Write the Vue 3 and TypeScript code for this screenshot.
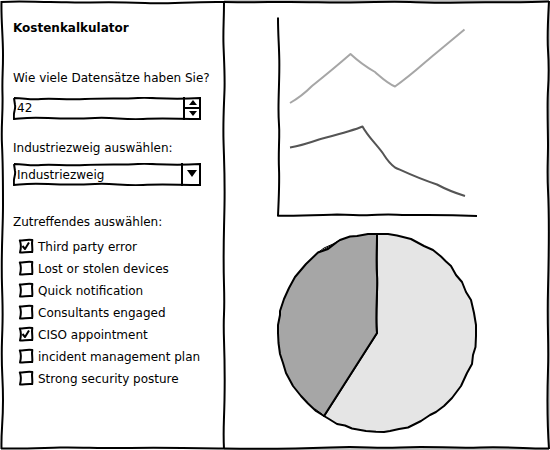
<script setup lang="ts">
import { ref } from 'vue'

interface Criterion {
  label: string
  checked: boolean
}

const records = ref<number>(42)
const industry = ref<string>('Industriezweig')
const criteria = ref<Criterion[]>([
  { label: 'Third party error', checked: true },
  { label: 'Lost or stolen devices', checked: false },
  { label: 'Quick notification', checked: false },
  { label: 'Consultants engaged', checked: false },
  { label: 'CISO appointment', checked: true },
  { label: 'incident management plan', checked: false },
  { label: 'Strong security posture', checked: false },
])

function step(delta: number): void {
  records.value = Math.max(0, Number(records.value) + delta)
}
</script>

<template>
  <main class="page">
    <svg class="outline" viewBox="0 0 550 450" preserveAspectRatio="none" aria-hidden="true">
      <path class="shade" d="M224 1 H549 V449 H224" />
      <path d="M1 2 C20 1 35 2 50 2 S75 3 90 2.500 S120 2 145 3 S190 1.500 224 2 S265 2 290 2 S330 3 350 2.500 S390 1.500 410 2 S445 3 465 2.500 S520 3 549 1.500" />
      <path d="M549 1 C548 20 547 35 548 50 S549 75 548 90 S548 130 548 145 S547 170 548 190 S549 250 548 290 S549 340 548 370 S547 420 549 449" />
      <path d="M1 448.500 C25 449 40 448 60 447.500 S100 448.500 130 448 S190 448 224 448.500 S290 449 330 447.500 S370 449 400 447.500 S450 448.500 480 447.500 S530 449 549 448.500" />
      <path d="M1.500 1 C1 20 3 35 3 55 S2 75 2.500 95 S1 125 2 145 S3 180 3 205 S1 250 2 285 S3 310 2 340 S3 375 3 400 S1 430 1.500 449" />
      <path d="M224 2 C224 20 223 30 223.500 45 S225 75 224.500 90 S223 120 223.500 140 S225 175 224.500 205 S223 250 224 285 S223 310 224 340 S225 375 224.500 400 S223 430 224 449" />
    </svg>

    <form class="sidebar" @submit.prevent>
      <h1>Kostenkalkulator</h1>

      <div class="field records">
        <label for="records">Wie viele Datensätze haben Sie?</label>
        <div class="control">
          <svg class="box" viewBox="0 0 188 23" preserveAspectRatio="none" aria-hidden="true">
            <path d="M1 1 C12 1 16 3 28 2 S52 3 72 2 S110 2 125 1 S152 3 187 1 V22 C165 22 150 21 130 22 S100 20 82 21 S55 22 35 21 S12 21 1 22 C0 15 3 12 2 8 L1 1" />
          </svg>
          <input id="records" v-model="records" type="number" min="0" />
          <div class="stepper">
            <button type="button" aria-label="Erhöhen" @click="step(1)">
              <svg viewBox="0 0 8 5" aria-hidden="true"><path d="M4 0 L8 5 H0 Z" /></svg>
            </button>
            <button type="button" aria-label="Verringern" @click="step(-1)">
              <svg viewBox="0 0 8 5" aria-hidden="true"><path d="M0 0 H8 L4 5 Z" /></svg>
            </button>
          </div>
        </div>
      </div>

      <div class="field industry">
        <label for="industry">Industriezweig auswählen:</label>
        <div class="control">
          <svg class="box" viewBox="0 0 188 23" preserveAspectRatio="none" aria-hidden="true">
            <path d="M1 1 C12 1 16 3 28 2 S52 3 72 2 S110 2 125 1 S152 3 187 1 V22 C165 22 150 21 130 22 S100 20 82 21 S55 22 35 21 S12 21 1 22 C0 15 3 12 2 8 L1 1" />
          </svg>
          <select id="industry" v-model="industry">
            <option>Industriezweig</option>
          </select>
          <span class="arrow" aria-hidden="true">
            <svg viewBox="0 0 10 7"><path d="M0 0 H10 L5 7 Z" /></svg>
          </span>
        </div>
      </div>

      <fieldset>
        <legend>Zutreffendes auswählen:</legend>
        <label v-for="item in criteria" :key="item.label" class="check">
          <span class="tick">
            <input v-model="item.checked" type="checkbox" />
            <svg viewBox="0 0 14 14" aria-hidden="true">
              <path d="M0.800 1.500 C4 1.800 7 0.300 13.300 1 C12.500 5 13.800 9 13.200 13 C9 12.500 5 13.500 1 13.400 C2.200 9 2.200 5 0.800 1.500 Z" />
              <path v-if="item.checked" d="M3.500 7 L6 10 L10 3.500" />
            </svg>
          </span>
          <span>{{ item.label }}</span>
        </label>
      </fieldset>
    </form>

    <section class="charts">
      <svg class="chart" viewBox="0 0 200 200" role="img" aria-label="Liniendiagramm">
        <path class="ink" d="M1 0.500 C1 18 2 26 2.300 43 S1.500 75 1.500 92 S2.500 105 2.200 120 S1.500 140 2 152 S2 178 1 198.700 C25 199 42 198 60 197.500 C75 197.500 78 198.500 90 198.300 S106 197 120 197.800 S155 197 200 199" />
        <path class="light-line" d="M13 86 C20 82 29 75 35 69 C45 61 62 47 73.500 37 C81 44 91 51 98 55 C105 61 110 66 118 69.500 C136 57 148 45 158 37 L187.500 12.500" />
        <path class="dark-line" d="M13 130.500 C22 129 32 126 42 122.500 C55 119 75 114 85.500 109.500 C91 120 102 130 107 138 Q112 146 118 150.500 C128 155 140 161 160 167.500 Q172 174 188 179" />
      </svg>
      <svg class="chart" viewBox="0 0 200 200" role="img" aria-label="Kreisdiagramm">
        <path class="ink slice-light" d="M100 1 L111 1 L120 2.500 L134 6 L147 13 L156 17 L164 23.500 L169 28.500 L174 33 L179 42 L185 49 L189 59 L194 67 L197 80 L198 86 L199 92 L199 103 L198.500 114 L196 122 L195 131 L190 140 L184 153 L175 165 L167 173 L159 179 L153 182 L144 188 L131 194.500 L122 196 L113 198 L107 199 L99 198.700 L89 198 L75 195.500 L68 192.500 L60 191 L52 186 L47 183 C64 156 82 128 100 100 C98 83 101 58 100 42 S100 15 100 1 Z" />
        <path class="ink slice-dark" d="M47 183 L39 178 L31 170.500 L24 163 L16 153 L9 140 L6 130 L3 121 L1.500 110 L1 100 L1 92 L3 82 L3 78 L7 66 L12 55 L18 44 L29 31 L41 19.500 L51 16 L60 9 L63 7 L73 3.500 L80 3 L91 1 L100 1 C100 15 99 28 100 42 S98 83 100 100 C82 128 64 156 47 183 Z" />
        <path class="hatch" d="M41 19.500 L47 15 L56 11 L63 7 M46 17 L57 11 M29 31 L37 23 M38 176 L45 181" />
      </svg>
    </section>
  </main>
</template>

<style>
body {
  margin: 0;
  background: #fff;
}
</style>

<style scoped>
.page {
  position: relative;
  display: grid;
  grid-template-columns: 224fr 326fr;
  min-height: 100vh;
  font: 12px/16px "DejaVu Sans", sans-serif;
  color: #000;
}

.outline {
  position: absolute;
  inset: 0;
  width: 100%;
  height: 100%;
  pointer-events: none;
}

.outline path,
.box path {
  fill: none;
  stroke: #000;
  stroke-width: 2;
  vector-effect: non-scaling-stroke;
}

.outline .shade {
  stroke: #888;
  stroke-width: 1;
}

.sidebar {
  padding: 20px 13px;
}

h1 {
  margin: 0 0 34px;
  font-size: 12px;
  line-height: 16px;
}

.field {
  display: grid;
}

.records {
  gap: 11px;
  margin-bottom: 20px;
}

.industry {
  gap: 7px;
  margin-bottom: 28px;
}

.control {
  position: relative;
  display: flex;
  height: 23px;
  margin-right: 10px;
}

.box {
  position: absolute;
  inset: 0;
  width: 100%;
  height: 100%;
  pointer-events: none;
}

.control input,
.control select {
  flex: 1;
  min-width: 0;
  box-sizing: border-box;
  margin: 0;
  padding: 0 4px;
  border: 0;
  border-radius: 0;
  outline-offset: 2px;
  background: none;
  color: inherit;
  font: inherit;
  appearance: none;
}

.control input {
  padding-bottom: 2px;
  appearance: textfield;
}

.control input::-webkit-inner-spin-button,
.control input::-webkit-outer-spin-button {
  margin: 0;
  appearance: none;
}

.control select {
  padding-right: 22px;
}

.stepper {
  display: grid;
  grid-template-rows: 10px 1fr;
  width: 18px;
  box-sizing: border-box;
  border-left: 2px solid #000;
}

.stepper button {
  display: grid;
  place-items: center;
  padding: 1px 0 0;
  border: 0;
  background: none;
}

.stepper button + button {
  padding: 0 0 2px;
  border-top: 2px solid #000;
}

.stepper svg {
  width: 8px;
  height: 5px;
}

.arrow {
  position: absolute;
  inset: 0 0 0 auto;
  display: grid;
  place-items: center;
  width: 20px;
  box-sizing: border-box;
  padding-bottom: 2px;
  border-left: 2px solid #000;
  pointer-events: none;
}

.arrow svg {
  width: 10px;
  height: 7px;
}

fieldset {
  min-width: 0;
  margin: 0;
  padding: 0;
  border: 0;
}

legend {
  margin-bottom: 6px;
  padding: 0;
}

.check {
  display: flex;
  align-items: center;
  gap: 5px;
  height: 22px;
  padding-left: 6px;
}

.tick {
  display: grid;
  width: 14px;
  height: 14px;
  margin-bottom: 2px;
}

.tick input,
.tick svg {
  grid-area: 1 / 1;
  width: 14px;
  height: 14px;
  margin: 0;
  overflow: visible;
}

.tick input {
  appearance: none;
}

.tick svg {
  fill: none;
  stroke: #000;
  stroke-width: 2;
  stroke-linejoin: round;
  pointer-events: none;
}

.charts {
  display: grid;
  align-content: start;
  gap: 16px;
  padding: 17px 73px 17px 53px;
}

.chart {
  display: block;
  width: 100%;
  overflow: visible;
  fill: none;
  stroke-width: 2;
  stroke-linejoin: round;
}

.ink {
  stroke: #000;
}

.light-line {
  stroke: #a6a6a6;
}

.dark-line {
  stroke: #555;
}

.slice-light {
  fill: #e5e5e5;
}

.slice-dark {
  fill: #a6a6a6;
}

.hatch {
  stroke: #000;
  stroke-width: 1;
}
</style>
